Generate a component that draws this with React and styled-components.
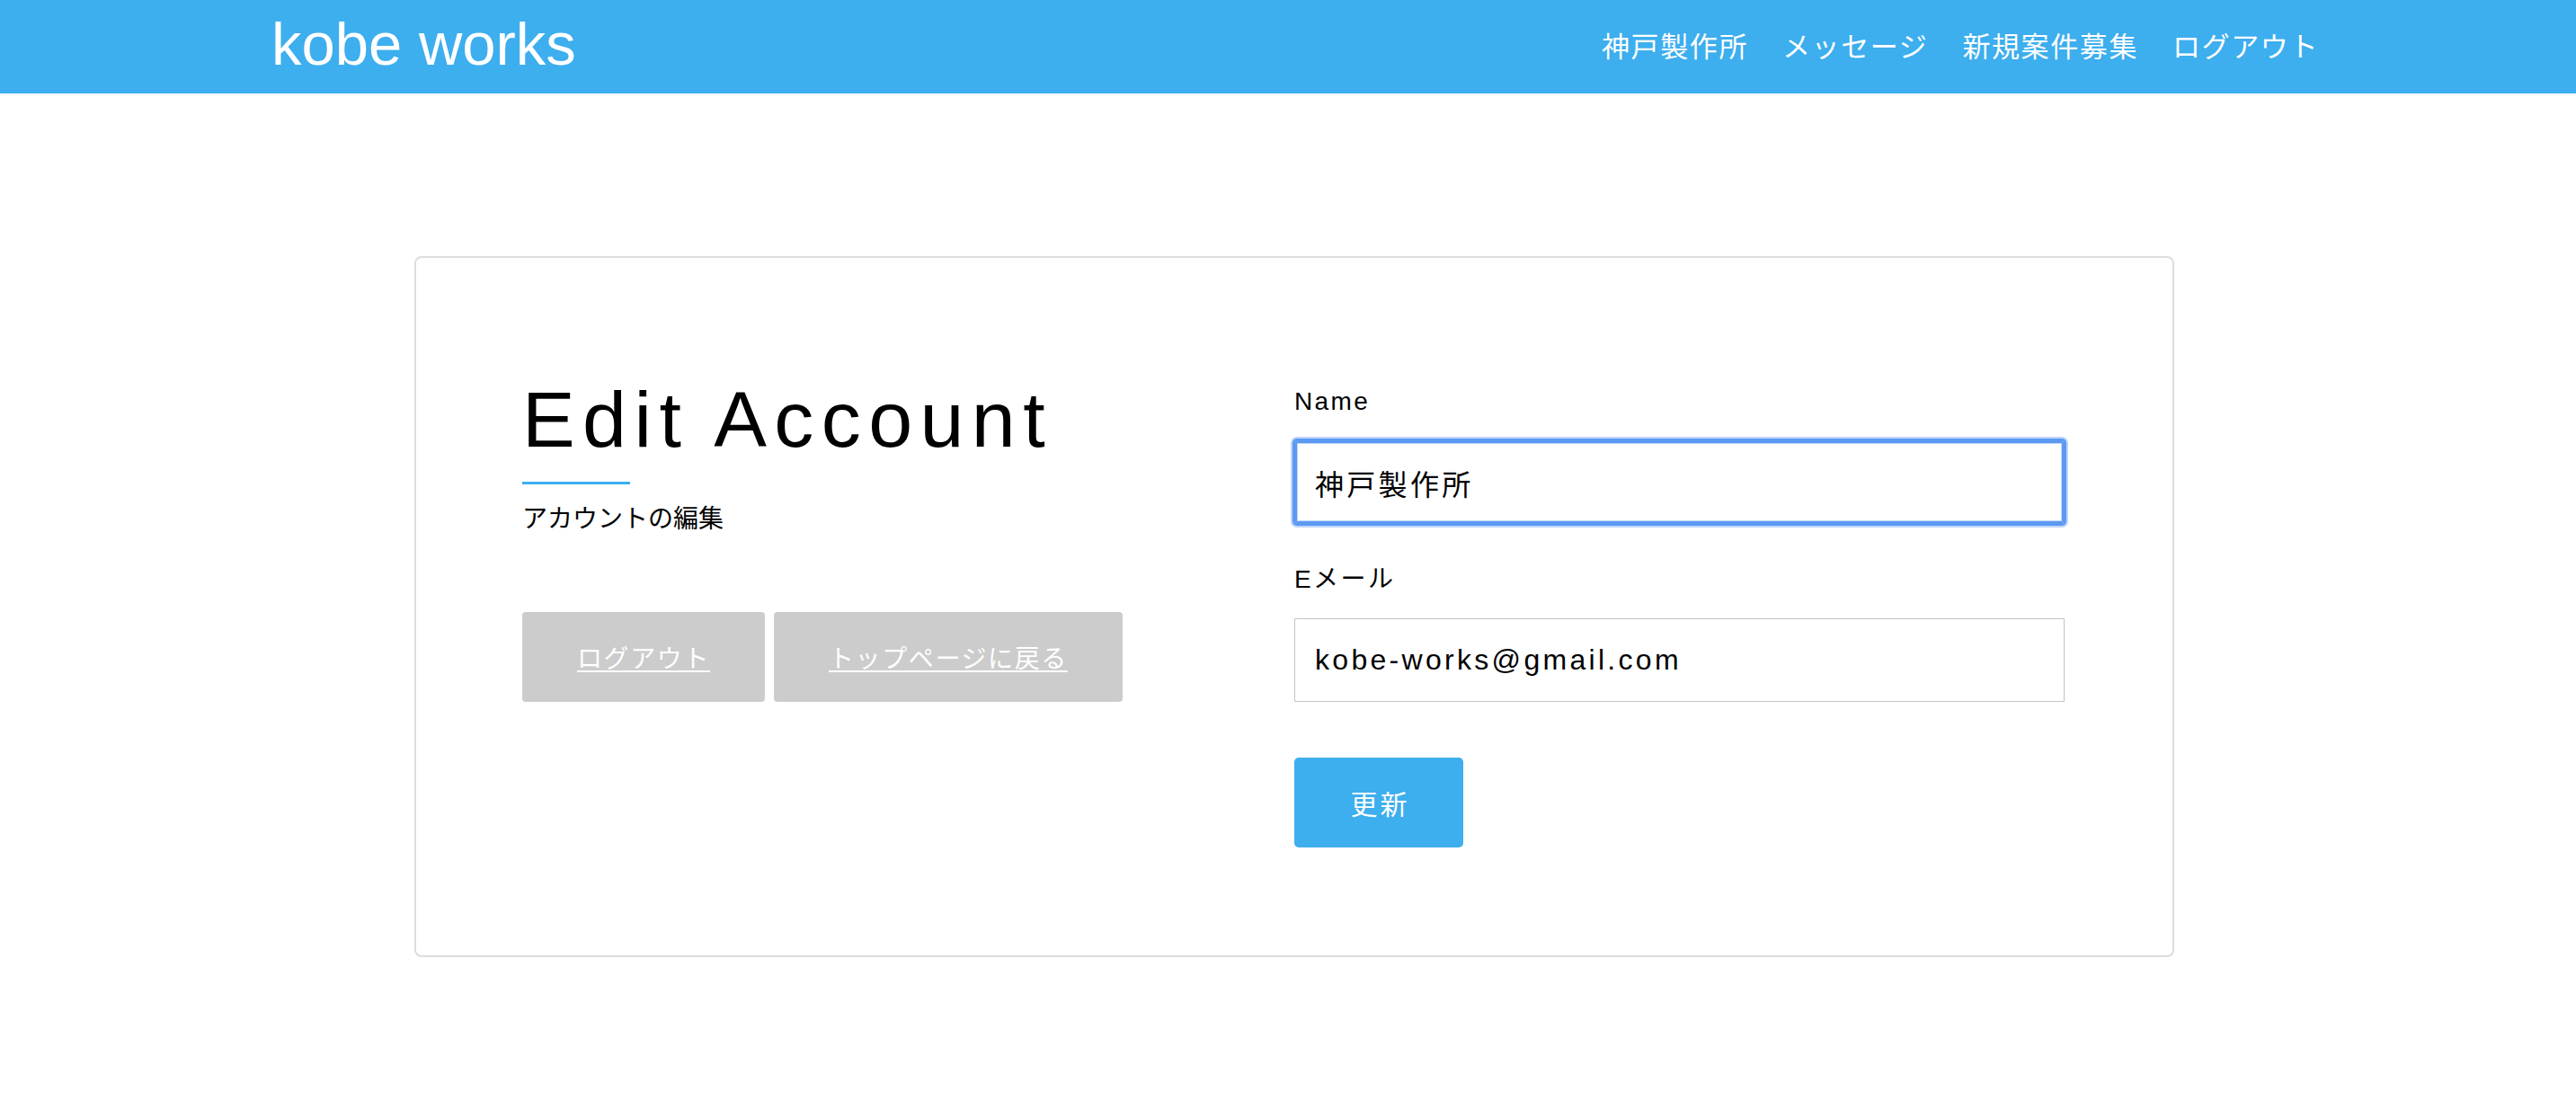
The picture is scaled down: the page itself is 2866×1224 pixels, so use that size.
import React from "react";
import styled, { createGlobalStyle } from "styled-components";

const GlobalStyle = createGlobalStyle`
  html, body {
    margin: 0;
    padding: 0;
    background: #ffffff;
  }
  body {
    font-family: "Liberation Sans", "Noto Sans CJK JP", sans-serif;
    letter-spacing: 1.6px;
    color: #000;
  }
  * { box-sizing: border-box; }
`;

const BLUE = "#3daeee";

const Page = styled.div`
  min-height: 1224px;
  background: #fff;
`;

const Header = styled.header`
  background: ${BLUE};
  height: 104px;
  padding-left: 14px;
`;

const HeaderInner = styled.div`
  width: 2280px;
  height: 100%;
  margin: 0 auto;
  display: flex;
  align-items: center;
  justify-content: space-between;
`;

const Logo = styled.a`
  color: #fff;
  font-size: 67px;
  line-height: 1;
  letter-spacing: 0;
  text-decoration: none;
  padding-bottom: 8px;
  padding-left: 2px;
`;

const Nav = styled.nav`
  display: flex;
  align-items: center;
  gap: 38px;
`;

const NavLink = styled.a`
  color: #fff;
  font-size: 31px;
  line-height: 1;
  text-decoration: none;
`;

const Main = styled.main`
  padding: 181px 0 0 14px;
`;

const Card = styled.section`
  width: 1958px;
  margin: 0 auto;
  border: 2px solid #dddddd;
  border-radius: 8px;
  padding: 127px 120px 120px 118px;
  display: grid;
  grid-template-columns: 859px 1fr;
`;

const Intro = styled.div`
  display: flex;
  flex-direction: column;
  align-items: flex-start;
`;

const Title = styled.h1`
  margin: 0;
  font-size: 88px;
  font-weight: 400;
  line-height: 1.2;
  letter-spacing: 8.4px;
  color: #000;
`;

const Accent = styled.span`
  display: block;
  width: 120px;
  height: 3px;
  margin-top: 16px;
  background: ${BLUE};
`;

const Subtitle = styled.p`
  margin: 18px 0 0;
  font-size: 28px;
  line-height: 42px;
  letter-spacing: 0;
`;

const ButtonRow = styled.div`
  display: flex;
  gap: 10px;
  margin-top: 82px;
`;

const GrayButton = styled.a`
  display: flex;
  align-items: center;
  justify-content: center;
  height: 100px;
  padding: 0 61px;
  background: #cccccc;
  color: #fff;
  border-radius: 4px;
  font-size: 28px;
  text-decoration: underline;
  text-underline-offset: 3px;
`;

const Form = styled.form`
  display: flex;
  flex-direction: column;
  gap: 41px;
  padding-top: 12px;
`;

const Field = styled.div`
  display: flex;
  flex-direction: column;
  gap: 22px;
`;

const Label = styled.label`
  font-size: 28px;
  line-height: 42px;
  letter-spacing: 2.4px;
`;

const Input = styled.input`
  width: 100%;
  height: 93px;
  padding: 0 22px;
  border: 1px solid ${(p) => (p.$focused ? "#5c99f2" : "#c4c4c4")};
  border-radius: ${(p) => (p.$focused ? "3px" : "0")};
  box-shadow: ${(p) =>
    p.$focused
      ? "0 0 0 2px #5c99f2, 0 0 0 4px rgba(92,153,242,0.4), inset 0 0 0 2px #5c99f2, inset 0 0 0 3px rgba(92,153,242,0.4)"
      : "none"};
  font-family: inherit;
  font-size: 32px;
  letter-spacing: 3.3px;
  color: #000;
  background: #fff;
  outline: none;
`;

const SubmitButton = styled.button`
  width: 188px;
  height: 100px;
  margin-top: 21px;
  border: none;
  border-radius: 5px;
  background: ${BLUE};
  color: #fff;
  font-family: inherit;
  font-size: 30px;
  letter-spacing: 3px;
  padding: 0 0 0 3px;
`;

const navItems = ["神戸製作所", "メッセージ", "新規案件募集", "ログアウト"];

export default function App() {
  return (
    <Page>
      <GlobalStyle />
      <Header>
        <HeaderInner>
          <Logo href="#">kobe works</Logo>
          <Nav>
            {navItems.map((item) => (
              <NavLink key={item} href="#">
                {item}
              </NavLink>
            ))}
          </Nav>
        </HeaderInner>
      </Header>
      <Main>
        <Card>
          <Intro>
            <Title>Edit Account</Title>
            <Accent />
            <Subtitle>アカウントの編集</Subtitle>
            <ButtonRow>
              <GrayButton href="#">ログアウト</GrayButton>
              <GrayButton href="#">トップページに戻る</GrayButton>
            </ButtonRow>
          </Intro>
          <Form onSubmit={(e) => e.preventDefault()}>
            <Field>
              <Label htmlFor="name">Name</Label>
              <Input id="name" $focused defaultValue="神戸製作所" />
            </Field>
            <Field>
              <Label htmlFor="email">Eメール</Label>
              <Input id="email" type="email" defaultValue="kobe-works@gmail.com" />
            </Field>
            <div>
              <SubmitButton type="submit">更新</SubmitButton>
            </div>
          </Form>
        </Card>
      </Main>
    </Page>
  );
}
